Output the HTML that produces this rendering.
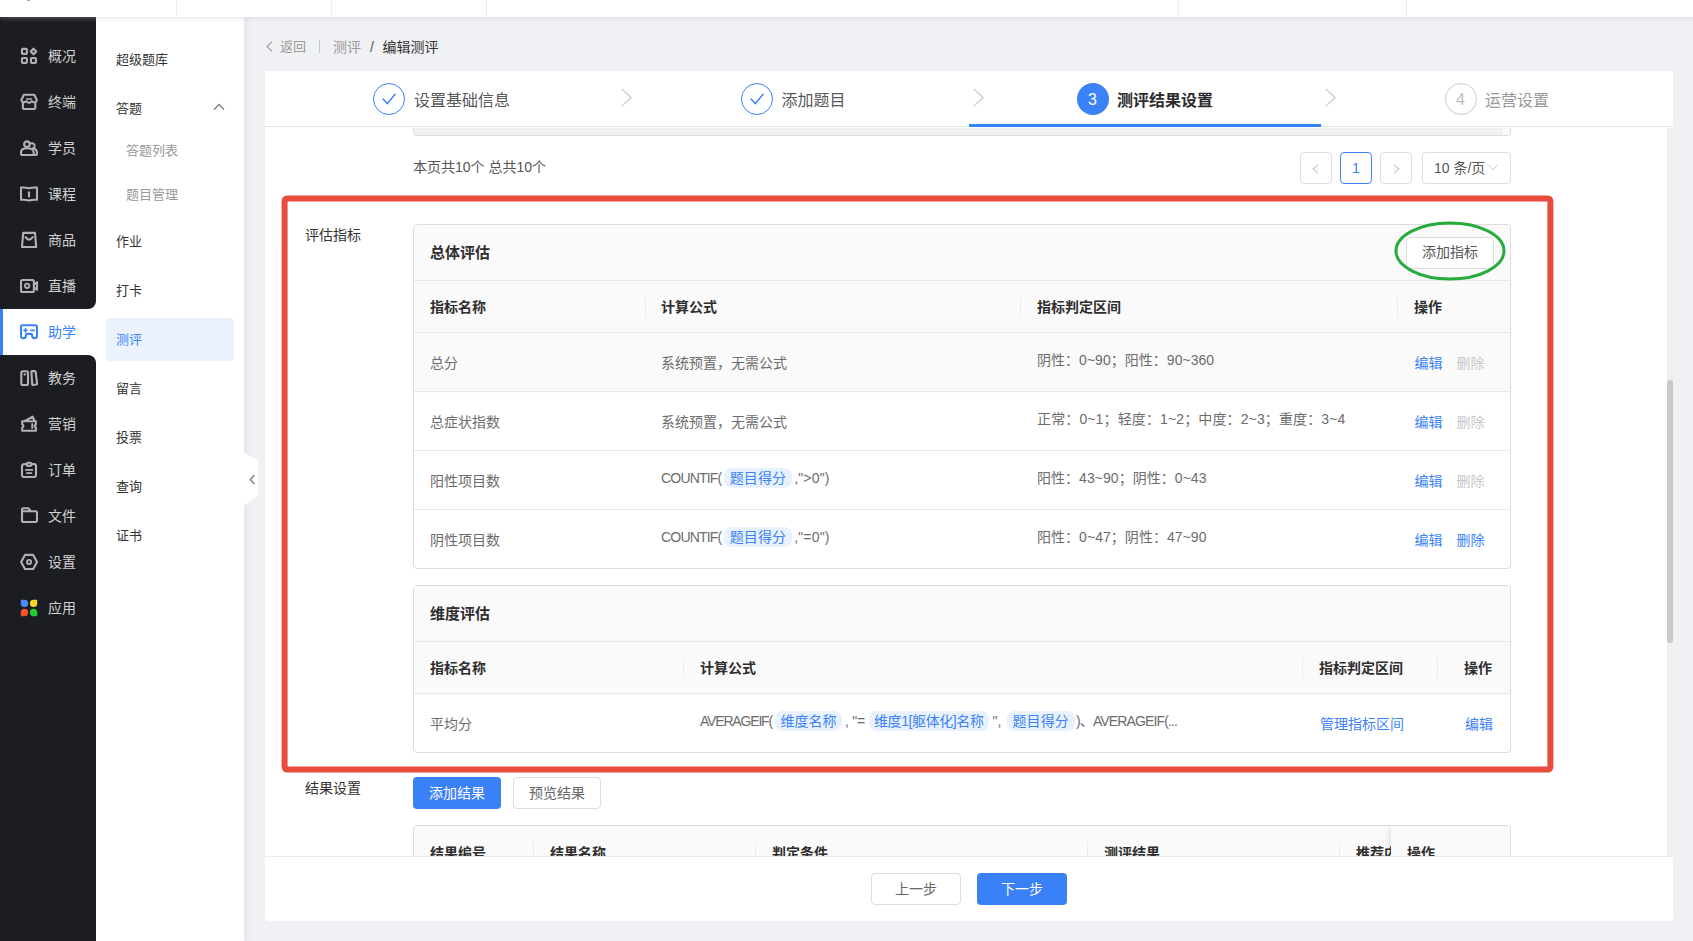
<!DOCTYPE html>
<html lang="zh-CN">
<head>
<meta charset="utf-8">
<title>编辑测评</title>
<style>
*{box-sizing:border-box;margin:0;padding:0}
html,body{width:1693px;height:941px;overflow:hidden}
body{position:relative;background:#f0f1f4;font-family:"Liberation Sans","Noto Sans CJK SC",sans-serif;font-size:14px;color:#333;line-height:1}
.abs{position:absolute}
.t{position:absolute;white-space:nowrap;line-height:20px;height:20px}
/* top bar */
#top{position:absolute;left:0;top:0;width:1693px;height:17px;background:#fff;box-shadow:0 1px 5px rgba(185,185,190,.4);z-index:5}
#top i{position:absolute;top:0;width:1px;height:16px;background:#ececec}
/* dark sidebar */
#nav{z-index:2;position:absolute;left:0;top:17px;width:96px;height:924px;background:#1c1d22}
#nav .it{position:absolute;left:0;width:96px;height:46px}
#nav .it svg{position:absolute;left:20px;top:14px;width:18px;height:18px}
#nav .it span{position:absolute;left:48px;top:13px;font-size:14px;line-height:20px;color:#d2d2d2}
#nav .act{background:#fff}
#nav .act span{color:#3b82f6}
/* second sidebar */
#sub{position:absolute;left:96px;top:17px;width:148px;height:924px;background:#fff;box-shadow:2px 0 8px rgba(0,0,0,.07);z-index:1}
#sub .m{position:absolute;left:20px;font-size:13px;line-height:20px;color:#333}
#sub .s{position:absolute;left:30px;font-size:13px;line-height:20px;color:#999}
#nav .act .bar{position:absolute;left:0;top:0;width:3px;height:46px;background:#3b82f6}
#nav .act:before,#nav .act:after{content:"";position:absolute;right:0;width:16px;height:16px;background:#1c1d22}
#nav .act:before{top:-16px;border-radius:0 0 8px 0;box-shadow:8px 8px 0 0 #fff}
#nav .act:after{bottom:-16px;border-radius:0 8px 0 0;box-shadow:8px -8px 0 0 #fff}
#sub .actbg{position:absolute;left:10px;top:301px;width:128px;height:43px;background:#ebf2fe;border-radius:4px}
#sub .chev{position:absolute;left:117px;top:86px;width:12px;height:8px}
/* main */
#card{position:absolute;left:265px;top:71px;width:1408px;height:850px;background:#fff;border-radius:0 0 4px 4px;overflow:hidden}
.tb{border:1px solid #dcdcdc;border-radius:4px;overflow:hidden;background:#fff}
.tag2{height:20px;line-height:20px;padding:0 5.5px;border-radius:8px;background:#e8f1fe;color:#3b82f6;font-size:14px;white-space:nowrap;overflow:hidden}
</style>
</head>
<body>
<div id="top"><b style="position:absolute;left:27px;top:0;width:3px;height:1px;background:#8c96b8;border-radius:0 0 2px 2px"></b><i style="left:176px"></i><i style="left:331px"></i><i style="left:486px"></i><i style="left:1178px"></i><i style="left:1406px"></i></div>
<div id="nav">
<div class="it" style="top:16px"><svg viewBox="0 0 18 18" fill="none" stroke="#b2b2b4" stroke-width="2.1" stroke-linejoin="round" stroke-linecap="round"><rect x="1.95" y="1.9" width="4.95" height="4.95" rx="0.9"/><rect x="1.95" y="11" width="4.95" height="4.95" rx="0.9"/><rect x="11" y="11" width="4.95" height="4.95" rx="0.9"/><path d="M13.5 1.7 L16.3 4.5 L13.5 7.3 L10.7 4.5 Z"/></svg><span>概况</span></div>
<div class="it" style="top:62px"><svg viewBox="0 0 18 18" fill="none" stroke="#b2b2b4" stroke-width="2.1" stroke-linejoin="round" stroke-linecap="round"><path d="M3.9 1.7 H14.3 L16.9 7.2 Q16.2 9.4 14.4 9.2 Q12.8 9.2 11.8 8.2 Q9.1 11.6 6.4 8.2 Q5.4 9.2 3.8 9.2 Q2 9.4 1.3 7.2 Z"/><path d="M2.9 9.6 V14.9 Q2.9 16 4 16 H14.2 Q15.3 16 15.3 14.9 V9.6"/><path d="M6.7 6.05 H11.5" stroke-width="1.6"/></svg><span>终端</span></div>
<div class="it" style="top:108px"><svg viewBox="0 0 18 18" fill="none" stroke="#b2b2b4" stroke-width="2.1" stroke-linejoin="round" stroke-linecap="round"><circle cx="6.9" cy="5.2" r="2.8"/><path d="M10.6 4.5 Q12.4 3.8 13.9 5 Q15.4 6.6 14.4 8.4 Q13.8 9.3 12.8 9.4"/><path d="M1 13.4 Q1 9.2 7 9.2 Q13.6 9.2 13.7 13.4 V16 H2.4 Q1 16 1 14.6 Z"/><path d="M13.7 16 H15.6 Q17.1 16 17.1 14.4 Q17.1 10.8 14.6 9.6"/></svg><span>学员</span></div>
<div class="it" style="top:154px"><svg viewBox="0 0 18 18" fill="none" stroke="#b2b2b4" stroke-width="2.1" stroke-linejoin="round" stroke-linecap="round"><path d="M1 2.6 Q5 2.2 9 3.2 Q13 2.2 17 2.6 V14.8 Q13 14.4 9 15.4 Q5 14.4 1 14.8 Z"/><path d="M9 7.3 V11.5"/></svg><span>课程</span></div>
<div class="it" style="top:200px"><svg viewBox="0 0 18 18" fill="none" stroke="#b2b2b4" stroke-width="2.1" stroke-linejoin="round" stroke-linecap="round"><path d="M3.2 1.9 H15 L16.2 16 H2 Z"/><path d="M5.5 6.2 Q9.1 11 12.7 6.2"/></svg><span>商品</span></div>
<div class="it" style="top:246px"><svg viewBox="0 0 18 18" fill="none" stroke="#b2b2b4" stroke-width="2.1" stroke-linejoin="round" stroke-linecap="round"><rect x="1" y="2.95" width="12.9" height="12.1" rx="1.5"/><circle cx="7.1" cy="8.8" r="2.2" stroke-width="1.8"/><path d="M14.6 7.2 L17 5.2 V12.8 L14.6 10.8" /></svg><span>直播</span></div>
<div class="it act" style="top:292px"><b class="bar"></b><svg viewBox="0 0 18 18" fill="none" stroke="#3b82f6" stroke-width="2.1" stroke-linejoin="round" stroke-linecap="round"><path d="M2.6 2.2 H15.4 Q17 2.2 17 3.8 V12.8 Q17 15.3 14.6 15.3 Q12.2 15.3 12.2 12.8 Q12.2 10.9 10.6 10.9 H7.4 Q5.9 10.9 5.9 12.8 Q5.9 15.3 3.4 15.3 Q1 15.3 1 12.8 V3.8 Q1 2.2 2.6 2.2 Z"/><path d="M4 7.35 H7 M5.5 5.85 V8.85 M10.9 7.35 H14.1" stroke-width="1.7"/></svg><span>助学</span></div>
<div class="it" style="top:338px"><svg viewBox="0 0 18 18" fill="none" stroke="#b2b2b4" stroke-width="2.1" stroke-linejoin="round" stroke-linecap="round"><rect x="1.3" y="2.2" width="6.7" height="13.8" rx="1.5"/><path d="M11.4 2.9 Q11.3 2.1 12.1 2.1 H14.7 Q15.5 2.1 15.6 2.9 L17.1 14.6 Q17.2 15.4 16.4 15.5 L13.1 16 Q12.3 16.1 12.2 15.3 Z"/><path d="M4.6 5.4 H5"/></svg><span>教务</span></div>
<div class="it" style="top:384px"><svg viewBox="0 0 18 18" fill="none" stroke="#b2b2b4" stroke-width="2.1" stroke-linejoin="round" stroke-linecap="round"><path d="M2.2 6.2 H15.9 V9.4 Q14.6 9.9 14.6 11 Q14.6 12.1 15.9 12.6 V15.8 H2.2 V12.6 Q3.4 12.1 3.4 11 Q3.4 9.9 2.2 9.4 Z"/><path d="M5 6 L12.6 1.7 L14.6 6"/><path d="M12.2 8.9 V13.1" stroke-width="1.8"/></svg><span>营销</span></div>
<div class="it" style="top:430px"><svg viewBox="0 0 18 18" fill="none" stroke="#b2b2b4" stroke-width="2.1" stroke-linejoin="round" stroke-linecap="round"><rect x="2" y="3.1" width="14" height="12.9" rx="2"/><rect x="6.6" y="1.75" width="4.8" height="3.1" rx="1.5" fill="#1c1d22"/><path d="M5.9 8.9 H12.2 M6.8 12.05 H11.4" stroke-width="1.8"/></svg><span>订单</span></div>
<div class="it" style="top:476px"><svg viewBox="0 0 18 18" fill="none" stroke="#b2b2b4" stroke-width="2.1" stroke-linejoin="round" stroke-linecap="round"><path d="M2 4.2 V2.6 Q2 1.2 3.4 1.2 H8.4 L10.6 4.2 H15.6 Q17 4.2 17 5.6 V13.6 Q17 15 15.6 15 H3.4 Q2 15 2 13.6 V4.2 H10.6"/></svg><span>文件</span></div>
<div class="it" style="top:522px"><svg viewBox="0 0 18 18" fill="none" stroke="#b2b2b4" stroke-width="2.1" stroke-linejoin="round" stroke-linecap="round"><path d="M5 1.9 H13.2 L17 8.95 L13.2 16 H5 L1.1 8.95 Z"/><circle cx="9.05" cy="8.95" r="2.05" stroke-width="1.9"/></svg><span>设置</span></div>
<div class="it" style="top:568px"><svg viewBox="0 0 18 18"><rect x="0.85" y="0.8" width="7.3" height="7.3" rx="3.6" fill="#4a8df8"/><rect x="0.85" y="0.8" width="3.6" height="3.6" rx="0.8" fill="#4a8df8"/><rect x="9.9" y="0.8" width="7.3" height="7.3" rx="3.6" fill="#f6d42a"/><rect x="13.6" y="0.8" width="3.6" height="3.6" rx="0.8" fill="#f6d42a"/><rect x="0.85" y="9.85" width="7.3" height="7.3" rx="3.6" fill="#f7522a"/><rect x="0.85" y="13.55" width="3.6" height="3.6" rx="0.8" fill="#f7522a"/><rect x="9.9" y="9.85" width="7.3" height="7.3" rx="3.6" fill="#22cc33"/><rect x="13.6" y="13.55" width="3.6" height="3.6" rx="0.8" fill="#22cc33"/></svg><span>应用</span></div>
</div>
<div id="sub">
<div class="m" style="top:33px">超级题库</div>
<div class="m" style="top:82px">答题</div>
<div class="s" style="top:124px">答题列表</div>
<div class="s" style="top:168px">题目管理</div>
<div class="m" style="top:215px">作业</div>
<div class="m" style="top:264px">打卡</div>
<div class="actbg"></div>
<div class="m" style="top:313px;color:#3b82f6">测评</div>
<div class="m" style="top:362px">留言</div>
<div class="m" style="top:411px">投票</div>
<div class="m" style="top:460px">查询</div>
<div class="m" style="top:509px">证书</div>
<svg class="chev" viewBox="0 0 12 8" fill="none" stroke="#666" stroke-width="1.1"><path d="M1 6.6 L6 1.4 L11 6.6"/></svg>
</div>
<div id="bc">
<svg class="abs" style="left:266px;top:41px;width:7px;height:11px" viewBox="0 0 7 11" fill="none" stroke="#999" stroke-width="1.1"><path d="M6.2 0.6 L1 5.5 L6.2 10.4"/></svg>
<div class="t" style="left:280px;top:37px;font-size:13px;color:#999">返回</div>
<div class="abs" style="left:319px;top:40px;width:1px;height:13px;background:#c4c4c4"></div>
<div class="t" style="left:333px;top:37px;font-size:14px;color:#999">测评</div>
<div class="t" style="left:370px;top:37px;font-size:14px;color:#555">/</div>
<div class="t" style="left:382.5px;top:37px;font-size:14px;color:#333">编辑测评</div>
</div>
<svg id="tog" class="abs" style="left:244px;top:450px;width:16px;height:58px;z-index:8" viewBox="0 0 16 58"><path d="M0 2.3 L14.2 10.8 V45.9 L0 55.5 Z" fill="#fff"/><path d="M10.4 25 L6.4 29.5 L10.4 34" fill="none" stroke="#808080" stroke-width="1.5"/></svg>
<div id="card">
<div class="abs" style="left:0px;top:0px;width:1408px;height:57px;background:#fff;z-index:3"></div>
<div class="abs" style="left:0px;top:55px;width:1408px;height:1px;background:#e4e4e4;z-index:3"></div>
<div class="abs" style="left:0;top:0;width:1408px;height:56px;z-index:4">
<div class="abs" style="left:108px;top:12px;width:32px;height:32px;border:1px solid #3b82f6;border-radius:50%"></div>
<svg class="abs" style="left:108px;top:12px;width:32px;height:32px" viewBox="0 0 32 32" fill="none" stroke="#3b82f6" stroke-width="1.4"><path d="M9.6 15.6 L14.4 20.6 L22.4 10.8"/></svg>
<div class="t" style="left:149px;top:20px;font-size:16px;color:#595959;font-weight:400;">设置基础信息</div>
<div class="abs" style="left:476px;top:12px;width:32px;height:32px;border:1px solid #3b82f6;border-radius:50%"></div>
<svg class="abs" style="left:476px;top:12px;width:32px;height:32px" viewBox="0 0 32 32" fill="none" stroke="#3b82f6" stroke-width="1.4"><path d="M9.6 15.6 L14.4 20.6 L22.4 10.8"/></svg>
<div class="t" style="left:516.5px;top:20px;font-size:16px;color:#595959;font-weight:400;">添加题目</div>
<div class="abs" style="left:811.5px;top:12px;width:32px;height:32px;background:#3b82f6;border-radius:50%;color:#fff;font-size:16px;line-height:34px;text-align:center">3</div>
<div class="t" style="left:852px;top:20px;font-size:16px;color:#2b2b2b;font-weight:700;">测评结果设置</div>
<div class="abs" style="left:1179.5px;top:12px;width:32px;height:32px;border:1px solid #ccc;border-radius:50%;color:#bbb;font-size:16px;line-height:32px;text-align:center">4</div>
<div class="t" style="left:1220px;top:20px;font-size:16px;color:#999;font-weight:400;">运营设置</div>
<svg class="abs" style="left:355.5px;top:17px;width:11px;height:19px" viewBox="0 0 11 19" fill="none" stroke="#c4c4c4" stroke-width="1.1"><path d="M0.8 0.8 L10 9.5 L0.8 18.2"/></svg>
<svg class="abs" style="left:707.5px;top:17px;width:11px;height:19px" viewBox="0 0 11 19" fill="none" stroke="#c4c4c4" stroke-width="1.1"><path d="M0.8 0.8 L10 9.5 L0.8 18.2"/></svg>
<svg class="abs" style="left:1059.5px;top:17px;width:11px;height:19px" viewBox="0 0 11 19" fill="none" stroke="#c4c4c4" stroke-width="1.1"><path d="M0.8 0.8 L10 9.5 L0.8 18.2"/></svg>
<div class="abs" style="left:704px;top:53px;width:352px;height:3px;background:#2f86f6"></div>
</div>
<div class="abs" style="left:148px;top:49px;width:1098px;height:16px;border:1px solid #dedede;border-radius:0 0 4px 4px;background:#f1f1f1"></div>
<div class="abs" style="left:1238px;top:57px;width:6px;height:7px;background:#fafafa"></div>
<div class="t" style="left:148px;top:86px;font-size:14px;color:#555;font-weight:400;">本页共10个 总共10个</div>
<div class="abs" style="left:1035px;top:81px;width:32px;height:32px;border:1px solid #dcdcdc;border-radius:4px;background:#fff"><svg class="abs" style="left:11px;top:11px;width:7px;height:10px" viewBox="0 0 7 10" fill="none" stroke="#c4c4c4" stroke-width="1.1"><path d="M6.2 0.6 L1 5 L6.2 9.4"/></svg></div>
<div class="abs" style="left:1075px;top:81px;width:32px;height:32px;border:1px solid #3b82f6;border-radius:4px;background:#fff"><div style="font-size:14px;line-height:30px;text-align:center;color:#3b82f6">1</div></div>
<div class="abs" style="left:1115px;top:81px;width:32px;height:32px;border:1px solid #dcdcdc;border-radius:4px;background:#fff"><svg class="abs" style="left:12px;top:11px;width:7px;height:10px" viewBox="0 0 7 10" fill="none" stroke="#c4c4c4" stroke-width="1.1"><path d="M0.8 0.6 L6 5 L0.8 9.4"/></svg></div>
<div class="abs" style="left:1157px;top:81px;width:89px;height:32px;border:1px solid #dcdcdc;border-radius:4px;background:#fff"><div style="font-size:14px;line-height:30px;padding-left:11px;color:#555">10 条/页</div><svg class="abs" style="left:65px;top:11px;width:10px;height:7px" viewBox="0 0 10 7" fill="none" stroke="#c4c4c4" stroke-width="1"><path d="M0.6 0.8 L5 5.8 L9.4 0.8"/></svg></div>
<div class="t" style="left:40px;top:154px;font-size:14px;color:#333;font-weight:400;">评估指标</div>
<div class="t" style="left:40px;top:707px;font-size:14px;color:#333;font-weight:400;">结果设置</div>
<div class="abs tb" style="left:148px;top:153px;width:1098px;height:345px">
<div class="abs" style="left:0;top:0;width:100%;height:168px;background:#fafafa"></div>
<div class="abs" style="left:0;top:55px;width:100%;height:1px;background:#e8e8e8"></div>
<div class="abs" style="left:0;top:107px;width:100%;height:1px;background:#e8e8e8"></div>
<div class="abs" style="left:0;top:166px;width:100%;height:1px;background:#e8e8e8"></div>
<div class="abs" style="left:0;top:225px;width:100%;height:1px;background:#e8e8e8"></div>
<div class="abs" style="left:0;top:284px;width:100%;height:1px;background:#e8e8e8"></div>
<div class="t" style="left:16px;top:17.5px;font-size:15px;color:#2e2e2e;font-weight:700;">总体评估</div>
<div class="abs" style="left:992px;top:12px;width:88px;height:32px;border:1px solid #dcdcdc;border-radius:4px;background:#fff;font-size:14px;line-height:28px;text-align:center;color:#555">添加指标</div>
<div class="t" style="left:16px;top:72px;font-size:14px;color:#2e2e2e;font-weight:700;">指标名称</div>
<div class="t" style="left:247px;top:72px;font-size:14px;color:#2e2e2e;font-weight:700;">计算公式</div>
<div class="t" style="left:623px;top:72px;font-size:14px;color:#2e2e2e;font-weight:700;">指标判定区间</div>
<div class="t" style="left:1000px;top:72px;font-size:14px;color:#2e2e2e;font-weight:700;">操作</div>
<div class="abs" style="left:231px;top:72px;width:1px;height:20px;background:#ececec"></div>
<div class="abs" style="left:606px;top:72px;width:1px;height:20px;background:#ececec"></div>
<div class="abs" style="left:983px;top:72px;width:1px;height:20px;background:#ececec"></div>
<div class="t" style="left:16px;top:128px;font-size:14px;color:#6c6c6c;font-weight:400;">总分</div>
<div class="t" style="left:247px;top:128px;font-size:14px;color:#6c6c6c;font-weight:400;">系统预置，无需公式</div>
<div class="t" style="left:623px;top:125px;font-size:14px;color:#6c6c6c;font-weight:400;white-space:pre;letter-spacing:0.03px;">阴性：0~90；阳性：90~360</div>
<div class="t" style="left:1000.5px;top:128px;font-size:14px;color:#3b82f6;font-weight:400;">编辑</div>
<div class="t" style="left:1042.5px;top:128px;font-size:14px;color:#c8c8c8;font-weight:400;">删除</div>
<div class="t" style="left:16px;top:187px;font-size:14px;color:#6c6c6c;font-weight:400;">总症状指数</div>
<div class="t" style="left:247px;top:187px;font-size:14px;color:#6c6c6c;font-weight:400;">系统预置，无需公式</div>
<div class="t" style="left:623px;top:184px;font-size:14px;color:#6c6c6c;font-weight:400;white-space:pre;letter-spacing:0.13px;">正常：0~1；轻度：1~2；中度：2~3；重度：3~4</div>
<div class="t" style="left:1000.5px;top:187px;font-size:14px;color:#3b82f6;font-weight:400;">编辑</div>
<div class="t" style="left:1042.5px;top:187px;font-size:14px;color:#c8c8c8;font-weight:400;">删除</div>
<div class="t" style="left:16px;top:246px;font-size:14px;color:#6c6c6c;font-weight:400;">阳性项目数</div>
<div class="t" style="left:247px;top:243px;font-size:14px;color:#6c6c6c;font-weight:400;white-space:pre;letter-spacing:-0.80px;">COUNTIF(</div>
<div class="abs tag2" style="left:310.29999999999995px;top:243px;width:67.3px;letter-spacing:0.07px">题目得分</div>
<div class="t" style="left:380.20000000000005px;top:243px;font-size:14px;color:#6c6c6c;font-weight:400;white-space:pre;letter-spacing:0.16px;">,"&gt;0")</div>
<div class="t" style="left:623px;top:243px;font-size:14px;color:#6c6c6c;font-weight:400;white-space:pre;letter-spacing:0.04px;">阳性：43~90；阴性：0~43</div>
<div class="t" style="left:1000.5px;top:246px;font-size:14px;color:#3b82f6;font-weight:400;">编辑</div>
<div class="t" style="left:1042.5px;top:246px;font-size:14px;color:#c8c8c8;font-weight:400;">删除</div>
<div class="t" style="left:16px;top:305px;font-size:14px;color:#6c6c6c;font-weight:400;">阴性项目数</div>
<div class="t" style="left:247px;top:302px;font-size:14px;color:#6c6c6c;font-weight:400;white-space:pre;letter-spacing:-0.80px;">COUNTIF(</div>
<div class="abs tag2" style="left:310.29999999999995px;top:302px;width:67.3px;letter-spacing:0.07px">题目得分</div>
<div class="t" style="left:380.20000000000005px;top:302px;font-size:14px;color:#6c6c6c;font-weight:400;white-space:pre;letter-spacing:0.16px;">,"=0")</div>
<div class="t" style="left:623px;top:302px;font-size:14px;color:#6c6c6c;font-weight:400;white-space:pre;letter-spacing:0.04px;">阳性：0~47；阴性：47~90</div>
<div class="t" style="left:1000.5px;top:305px;font-size:14px;color:#3b82f6;font-weight:400;">编辑</div>
<div class="t" style="left:1042.5px;top:305px;font-size:14px;color:#3b82f6;font-weight:400;">删除</div>
</div>
<div class="abs tb" style="left:148px;top:514px;width:1098px;height:168px">
<div class="abs" style="left:0;top:0;width:100%;height:109px;background:#fafafa"></div>
<div class="abs" style="left:0;top:55px;width:100%;height:1px;background:#e8e8e8"></div>
<div class="abs" style="left:0;top:107px;width:100%;height:1px;background:#e8e8e8"></div>
<div class="t" style="left:16px;top:17.5px;font-size:15px;color:#2e2e2e;font-weight:700;">维度评估</div>
<div class="t" style="left:16px;top:72px;font-size:14px;color:#2e2e2e;font-weight:700;">指标名称</div>
<div class="t" style="left:286px;top:72px;font-size:14px;color:#2e2e2e;font-weight:700;">计算公式</div>
<div class="t" style="left:905px;top:72px;font-size:14px;color:#2e2e2e;font-weight:700;">指标判定区间</div>
<div class="t" style="left:1050px;top:72px;font-size:14px;color:#2e2e2e;font-weight:700;">操作</div>
<div class="abs" style="left:269px;top:72px;width:1px;height:20px;background:#ececec"></div>
<div class="abs" style="left:888px;top:72px;width:1px;height:20px;background:#ececec"></div>
<div class="abs" style="left:1023px;top:72px;width:1px;height:20px;background:#ececec"></div>
<div class="t" style="left:16px;top:128px;font-size:14px;color:#6c6c6c;font-weight:400;">平均分</div>
<div class="t" style="left:286px;top:125px;font-size:14px;color:#6c6c6c;font-weight:400;white-space:pre;letter-spacing:-1.18px;">AVERAGEIF(</div>
<div class="abs tag2" style="left:361px;top:125px;width:67px;letter-spacing:0.00px">维度名称</div>
<div class="t" style="left:431px;top:125px;font-size:14px;color:#6c6c6c;font-weight:400;white-space:pre;letter-spacing:-0.23px;">, "=</div>
<div class="abs tag2" style="left:454.5px;top:125px;width:120.5px;letter-spacing:-0.41px">维度1[躯体化]名称</div>
<div class="t" style="left:578.5px;top:125px;font-size:14px;color:#6c6c6c;font-weight:400;white-space:pre;">",</div>
<div class="abs tag2" style="left:593px;top:125px;width:67.5px;letter-spacing:0.12px">题目得分</div>
<div class="t" style="left:662px;top:125px;font-size:14px;color:#6c6c6c;font-weight:400;white-space:pre;letter-spacing:-0.87px;">)、AVERAGEIF(...</div>
<div class="t" style="left:906px;top:128px;font-size:14px;color:#3b82f6;font-weight:400;">管理指标区间</div>
<div class="t" style="left:1051px;top:128px;font-size:14px;color:#3b82f6;font-weight:400;">编辑</div>
</div>
<div class="abs" style="left:148px;top:706px;width:88px;height:32px;border-radius:4px;background:#3a80f7;font-size:14px;line-height:32px;text-align:center;color:#fff">添加结果</div>
<div class="abs" style="left:248px;top:706px;width:88px;height:32px;border-radius:4px;border:1px solid #dcdcdc;background:#fff;font-size:14px;line-height:30px;text-align:center;color:#666">预览结果</div>
<div class="abs tb" style="left:148px;top:754px;width:1098px;height:120px;background:#fafafa">
<div class="t" style="left:16px;top:17px;font-size:14px;color:#2e2e2e;font-weight:700;">结果编号</div>
<div class="t" style="left:136px;top:17px;font-size:14px;color:#2e2e2e;font-weight:700;">结果名称</div>
<div class="t" style="left:358px;top:17px;font-size:14px;color:#2e2e2e;font-weight:700;">判定条件</div>
<div class="t" style="left:690px;top:17px;font-size:14px;color:#2e2e2e;font-weight:700;">测评结果</div>
<div class="t" style="left:942px;top:17px;font-size:14px;color:#2e2e2e;font-weight:700;">推荐内容</div>
<div class="abs" style="left:119px;top:16px;width:1px;height:20px;background:#ececec"></div>
<div class="abs" style="left:341px;top:16px;width:1px;height:20px;background:#ececec"></div>
<div class="abs" style="left:673px;top:16px;width:1px;height:20px;background:#ececec"></div>
<div class="abs" style="left:925px;top:16px;width:1px;height:20px;background:#ececec"></div>
<div class="abs" style="left:977px;top:0;width:120px;height:120px;background:#fafafa;box-shadow:-4px 0 6px -2px rgba(0,0,0,.10)"></div>
<div class="t" style="left:993px;top:17px;font-size:14px;color:#2e2e2e;font-weight:700;">操作</div>
</div>
<div class="abs" style="left:0px;top:785px;width:1408px;height:65px;background:#fff;border-top:1px solid #ececec;z-index:6"></div>
<div class="abs" style="z-index:7;left:606px;top:802px;width:90px;height:32px;border-radius:4px;border:1px solid #dcdcdc;background:#fff;font-size:14px;line-height:30px;text-align:center;color:#666">上一步</div>
<div class="abs" style="z-index:7;left:712px;top:802px;width:90px;height:32px;border-radius:4px;background:#3a80f7;font-size:14px;line-height:32px;text-align:center;color:#fff">下一步</div>
<div class="abs" style="left:1402px;top:56px;width:6px;height:729px;background:#efefef;z-index:1"></div>
<div class="abs" style="left:1402px;top:309px;width:6px;height:263px;background:#c9c9c9;border-radius:3px;z-index:2"></div>
<svg class="abs" style="left:5px;top:119px;width:1300px;height:590px;z-index:2" viewBox="270 190 1300 590" fill="none" stroke="#e84c3d" stroke-width="6" stroke-linejoin="round"><rect x="284.6" y="198.5" width="1265.8" height="571" rx="2.5"/></svg>
<svg class="abs" style="left:1125px;top:146px;width:120px;height:68px;z-index:2" viewBox="0 0 120 68" fill="none" stroke="#27ab3d" stroke-width="3"><ellipse cx="60" cy="34" rx="54" ry="28"/></svg>
</div>
</body>
</html>
